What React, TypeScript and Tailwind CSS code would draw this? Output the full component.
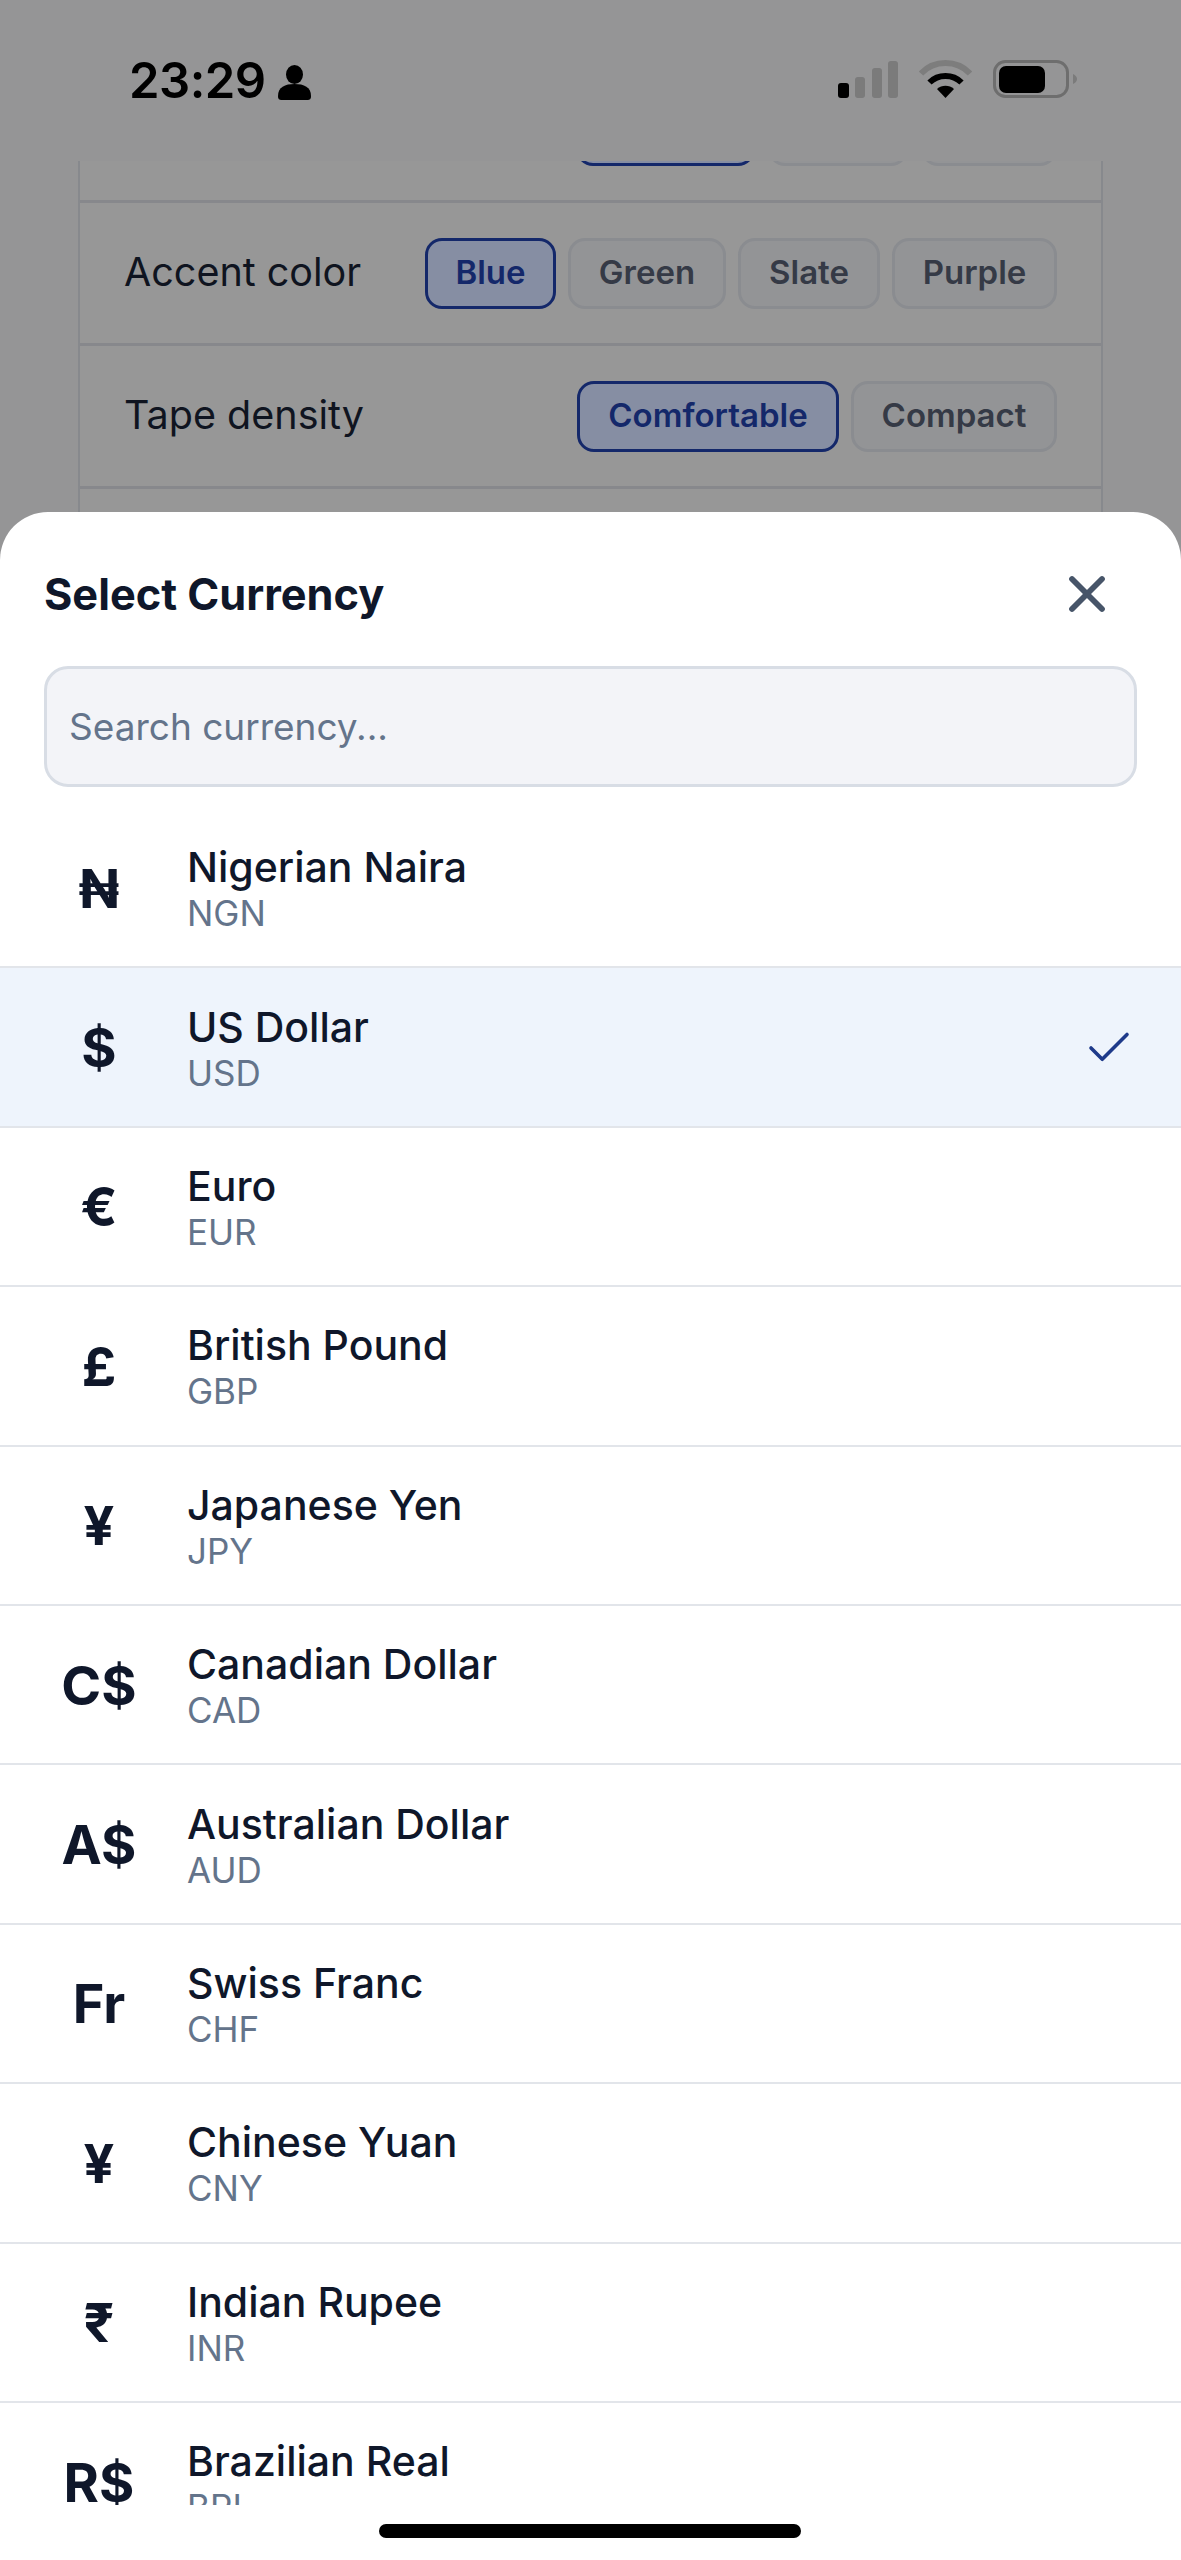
import { Check, X } from 'lucide-react';

const currencies = [
  { symbol: '₦', name: 'Nigerian Naira', code: 'NGN' },
  { symbol: '$', name: 'US Dollar', code: 'USD', selected: true },
  { symbol: '€', name: 'Euro', code: 'EUR' },
  { symbol: '£', name: 'British Pound', code: 'GBP' },
  { symbol: '¥', name: 'Japanese Yen', code: 'JPY' },
  { symbol: 'C$', name: 'Canadian Dollar', code: 'CAD' },
  { symbol: 'A$', name: 'Australian Dollar', code: 'AUD' },
  { symbol: 'Fr', name: 'Swiss Franc', code: 'CHF' },
  { symbol: '¥', name: 'Chinese Yuan', code: 'CNY' },
  { symbol: '₹', name: 'Indian Rupee', code: 'INR' },
  { symbol: 'R$', name: 'Brazilian Real', code: 'BRL' },
];

function Chip({ label, active, width }: { label: string; active?: boolean; width: string }) {
  return (
    <div
      className={`${width} h-[71px] shrink-0 flex items-center justify-center rounded-[17px] border-[3px] text-[33px] font-semibold ${
        active
          ? 'border-[#14286a] bg-[#868ea3] text-[#14286a]'
          : 'border-[#8a8c90] bg-[#939496] text-[#353a46]'
      }`}
    >
      {label}
    </div>
  );
}

function StatusBar() {
  return (
    <div className="h-[161px] flex items-start justify-between pl-[129px] pr-[104px] pt-[52px] text-black">
      <div className="flex items-center gap-[12px]">
        <span className="text-[49px] leading-[58px] font-semibold tracking-[-0.5px]">23:29</span>
        <svg width="33" height="35" viewBox="0 0 33 35" className="mt-[2px]">
          <ellipse cx="16.5" cy="9.5" rx="8.5" ry="9.5" fill="#000" />
          <path d="M0 31c0-9 7-12 16.5-12S33 22 33 31c0 3-1 4-4 4H4c-3 0-4-1-4-4z" fill="#000" />
        </svg>
      </div>
      <div className="flex items-end gap-[21px] pt-[8px]">
        <svg width="60" height="38" viewBox="0 0 60 38">
          <rect x="0" y="23" width="11" height="15" rx="3" fill="#000" />
          <rect x="17" y="17" width="10" height="21" rx="3" fill="#7b7b7b" />
          <rect x="34" y="8" width="10" height="30" rx="3" fill="#7b7b7b" />
          <rect x="50" y="1" width="10" height="37" rx="3" fill="#7b7b7b" />
        </svg>
        <svg width="53" height="38" viewBox="0 0 53 38">
          <path d="M2 13.5C8.5 6.500 17 3 26.500 3S44.500 6.500 51 13.500" fill="none" stroke="#7d7d7d" strokeWidth="6" />
          <path d="M10.500 22.500C14.500 18.500 20 16 26.500 16s12 2.500 16 6.500" fill="none" stroke="#000" strokeWidth="6" />
          <path d="M18 29c2.500-2 5.300-3.200 8.500-3.200S32.500 27 35 29l-8.500 9z" fill="#000" />
        </svg>
        <svg width="84" height="38" viewBox="0 0 84 38">
          <rect x="1.500" y="1.500" width="73" height="35" rx="11" fill="none" stroke="#6e6e6e" strokeWidth="3" />
          <rect x="6" y="6" width="46" height="27" rx="7" fill="#000" />
          <path d="M80 14c2.500 1 4 3 4 5s-1.500 4-4 5z" fill="#7b7b7b" />
        </svg>
      </div>
    </div>
  );
}

function SettingsBehind() {
  return (
    <div className="mx-[78px] border-x-2 border-[#87898d] bg-[#979797]">
      <div className="h-[42px] overflow-hidden flex items-end justify-end gap-[13px] pr-[44px] pb-[34px] border-b-[3px] border-[#87888c]">
        <div className="w-[179px] h-[71px] shrink-0 rounded-[17px] border-[3px] border-[#14286a] bg-[#868ea3]" />
        <div className="w-[140px] h-[71px] shrink-0 rounded-[17px] border-[3px] border-[#8a8c90] bg-[#939496]" />
        <div className="w-[136px] h-[71px] shrink-0 rounded-[17px] border-[3px] border-[#8a8c90] bg-[#939496]" />
      </div>
      <div className="h-[143px] flex items-center justify-between pl-[44px] pr-[44px] border-b-[3px] border-[#87888c]">
        <span className="text-[39.500px] text-[#0f1420]">Accent color</span>
        <div className="flex gap-[12px]">
          <Chip label="Blue" active width="w-[131px]" />
          <Chip label="Green" width="w-[158px]" />
          <Chip label="Slate" width="w-[142px]" />
          <Chip label="Purple" width="w-[165px]" />
        </div>
      </div>
      <div className="h-[143px] flex items-center justify-between pl-[44px] pr-[44px] border-b-[3px] border-[#87888c]">
        <span className="text-[39.500px] text-[#0f1420]">Tape density</span>
        <div className="flex gap-[12px]">
          <Chip label="Comfortable" active width="w-[262px]" />
          <Chip label="Compact" width="w-[206px]" />
        </div>
      </div>
      <div className="h-[60px]" />
    </div>
  );
}

function CurrencyRow({ symbol, name, code, selected }: { symbol: string; name: string; code: string; selected?: boolean }) {
  return (
    <div className={`h-[159.4px] shrink-0 flex items-center border-b-2 border-[#e2e5ea] pl-[44px] pr-[48px] ${selected ? 'bg-[#eef4fc]' : ''}`}>
      <div className="w-[110px] shrink-0 text-center text-[54px] leading-none font-bold text-[#0f172a] mt-[2px]">{symbol}</div>
      <div className="ml-[33px] flex-1 mt-[1px]">
        <div className="text-[41px] leading-[50px] font-medium text-[#0f172a]">{name}</div>
        <div className="text-[35px] leading-[42px] text-[#64748b]">{code}</div>
      </div>
      {selected && <Check size={54} strokeWidth={1.6} className="text-[#1e3a8a] mr-[-3px] mt-[2px]" />}
    </div>
  );
}

export default function App() {
  return (
    <div className="relative h-[2560px] overflow-hidden bg-[#959596] font-['Inter',sans-serif]">
      <StatusBar />
      <SettingsBehind />

      <div className="absolute inset-x-0 top-[512px] bottom-0 rounded-t-[48px] bg-white flex flex-col">
        <div className="h-[154px] shrink-0 flex items-center justify-between pl-[44px] pr-[64px]">
          <h2 className="text-[43.300px] font-bold text-[#0f172a] mt-[11px]">Select Currency</h2>
          <X size={60} strokeWidth={2.3} className="text-[#475569] mt-[9px]" />
        </div>
        <div className="mx-[44px] h-[121px] shrink-0 rounded-[24px] border-[3px] border-[#d8dde5] bg-[#f3f4f8] px-[22px] flex items-center">
          <input
            placeholder="Search currency..."
            className="w-full bg-transparent text-[37px] outline-none placeholder:text-[#64748b]"
          />
        </div>
        <div className="h-[1696px] mt-[22px] overflow-hidden flex flex-col">
          {currencies.map((c) => (
            <CurrencyRow key={c.code} {...c} />
          ))}
        </div>
      </div>

      <div className="absolute left-[379px] top-[2524px] w-[422px] h-[14px] rounded-full bg-black" />
    </div>
  );
}
